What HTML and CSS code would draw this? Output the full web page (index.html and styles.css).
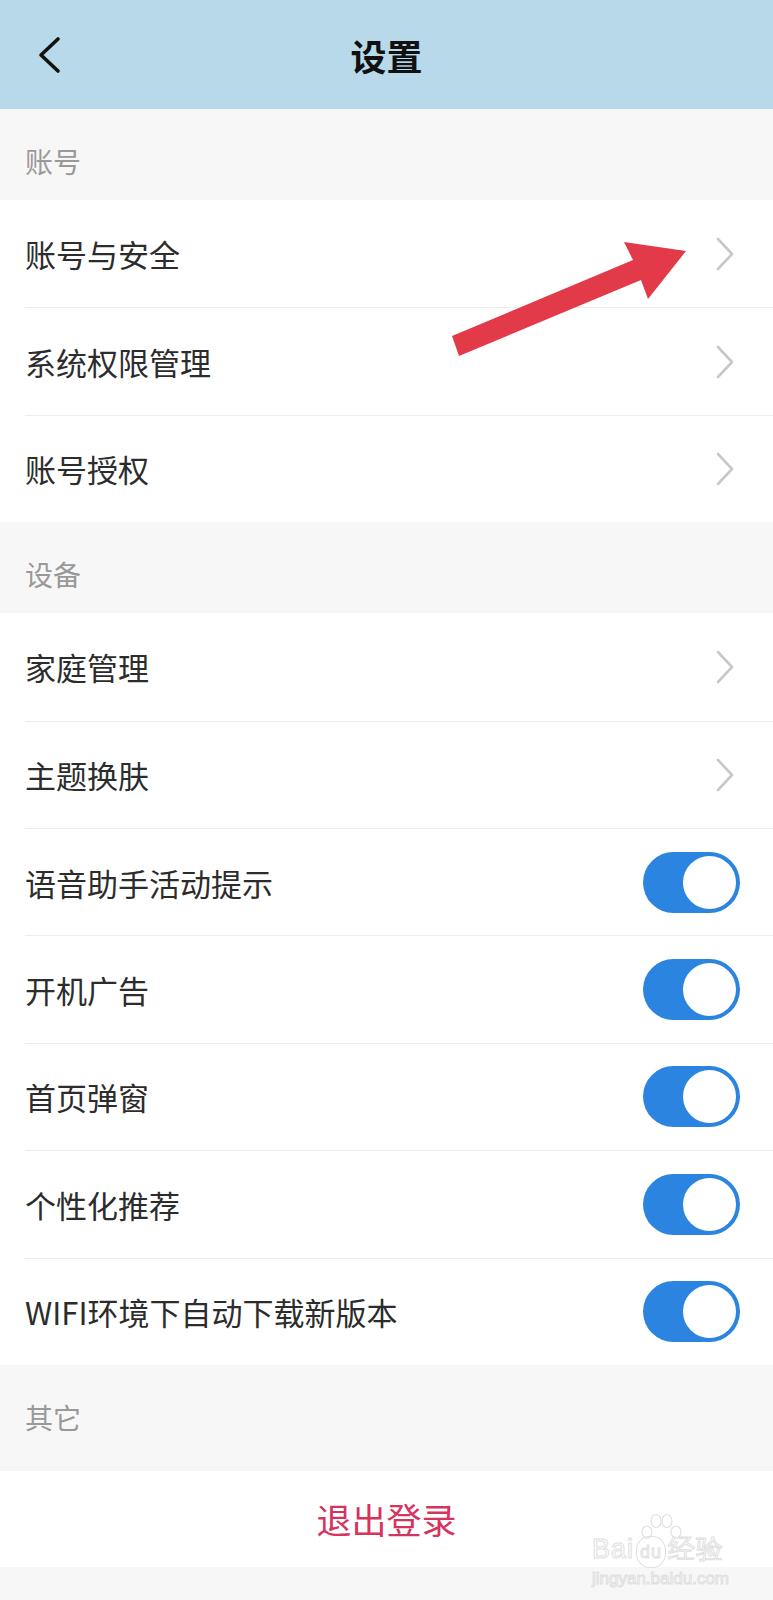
FILE: index.html
```html
<!DOCTYPE html>
<html>
  <head>
    <meta charset="utf-8">
    <link rel="stylesheet" href="styles.css">
  </head>
  <body>
    <header class="topbar">
      <div class="back">
        <svg width="30" height="44" viewBox="0 0 30 44">
          <polyline points="23,6 6,22 23,38" fill="none" stroke="#111" stroke-width="3.6" stroke-linecap="round" stroke-linejoin="round" />
        </svg>
      </div>
      <h1 class="title">设置</h1>
      <div></div>
    </header>

    <div class="section-label">账号</div>
    <div class="group">
      <div class="row"><span>账号与安全</span><svg class="chevron" width="20" height="34" viewBox="0 0 20 34"><polyline points="3,2 17,17 3,32" /></svg></div>
      <div class="row"><span>系统权限管理</span><svg class="chevron" width="20" height="34" viewBox="0 0 20 34"><polyline points="3,2 17,17 3,32" /></svg></div>
      <div class="row"><span>账号授权</span><svg class="chevron" width="20" height="34" viewBox="0 0 20 34"><polyline points="3,2 17,17 3,32" /></svg></div>
    </div>

    <div class="section-label">设备</div>
    <div class="group">
      <div class="row"><span>家庭管理</span><svg class="chevron" width="20" height="34" viewBox="0 0 20 34"><polyline points="3,2 17,17 3,32" /></svg></div>
      <div class="row"><span>主题换肤</span><svg class="chevron" width="20" height="34" viewBox="0 0 20 34"><polyline points="3,2 17,17 3,32" /></svg></div>
      <div class="row"><span>语音助手活动提示</span><div class="switch on"><div class="knob"></div></div></div>
      <div class="row"><span>开机广告</span><div class="switch on"><div class="knob"></div></div></div>
      <div class="row"><span>首页弹窗</span><div class="switch on"><div class="knob"></div></div></div>
      <div class="row"><span>个性化推荐</span><div class="switch on"><div class="knob"></div></div></div>
      <div class="row"><span>WIFI环境下自动下载新版本</span><div class="switch on"><div class="knob"></div></div></div>
    </div>

    <div class="section-label tall">其它</div>
    <div class="logout">退出登录</div>

    <!-- annotation arrow drawn over the screenshot -->
    <svg class="annotation" width="773" height="400" viewBox="0 0 773 400">
      <polygon points="452,336 633,260 624,242 686,251 648,299 641,280 459,356" fill="#e23a48" />
    </svg>

    <div class="watermark">
      <svg class="wm-toes" width="44" height="30" viewBox="0 0 44 30">
        <ellipse cx="8" cy="20" rx="5" ry="6" />
        <ellipse cx="17" cy="9" rx="5" ry="6.5" />
        <ellipse cx="28" cy="9" rx="5" ry="6.5" />
        <ellipse cx="37" cy="20" rx="5" ry="6" />
      </svg>
      <div class="wm-logo">Bai<span class="wm-paw">du</span>经验</div>
      <div class="wm-url">jingyan.baidu.com</div>
    </div>
  </body>
</html>
```

FILE: styles.css
```css
body {
  margin: 0;
  background-color: #f7f7f7;
  font-family: "Noto Sans CJK SC", "Noto Sans", sans-serif;
  color: #2c2c2c;
  position: relative;
  min-height: 1600px;
}

.topbar {
  height: 109px;
  background-color: #b8d9ea;
  display: grid;
  grid-template-columns: 1fr auto 1fr;
  align-items: center;
}

.back {
  padding-left: 35px;
  display: flex;
  align-items: center;
}

.title {
  margin: 0;
  font-size: 36px;
  font-weight: 700;
  color: #111;
  line-height: 1;
}

.section-label {
  box-sizing: border-box;
  height: 91px;
  padding-top: 39px;
  padding-left: 25px;
  font-size: 28px;
  line-height: 27px;
  color: #999999;
}

.section-label.tall {
  height: 106px;
}

.group {
  background-color: #ffffff;
  padding-left: 25px;
}

.row {
  box-sizing: border-box;
  height: 107.4px;
  display: flex;
  align-items: center;
  justify-content: space-between;
  padding-right: 33px;
  font-size: 31px;
}

.row + .row {
  border-top: 1px solid #ededed;
}

.chevron {
  margin-right: 5px;
}

.chevron polyline {
  fill: none;
  stroke: #c8c8c8;
  stroke-width: 2.6;
  stroke-linecap: round;
  stroke-linejoin: round;
}

.switch {
  box-sizing: border-box;
  width: 97px;
  height: 61px;
  border-radius: 31px;
  background-color: #2b84e0;
  padding: 4px;
  display: flex;
  justify-content: flex-end;
}

.knob {
  width: 53px;
  height: 53px;
  border-radius: 50%;
  background-color: #ffffff;
}

.logout {
  height: 96px;
  background-color: #ffffff;
  display: flex;
  align-items: center;
  justify-content: center;
  font-size: 35px;
  color: #d5345e;
}

.annotation {
  position: absolute;
  left: 0;
  top: 0;
  pointer-events: none;
}

.watermark {
  position: absolute;
  left: 592px;
  top: 1512px;
  color: rgba(255, 255, 255, 0.5);
  -webkit-text-stroke: 1px #e0e0e0;
  font-family: "Liberation Sans", sans-serif;
  pointer-events: none;
}

.wm-toes {
  display: block;
  margin-left: 47px;
  margin-bottom: -8px;
  fill: none;
  stroke: #e0e0e0;
  stroke-width: 1.2;
}

.wm-logo {
  font-size: 27px;
  line-height: 30px;
  letter-spacing: 1px;
}

.wm-paw {
  display: inline-block;
  font-size: 18px;
  border: 1px solid #e0e0e0;
  border-radius: 45%;
  padding: 0 3px;
  margin: 0 2px;
}

.wm-url {
  font-size: 17px;
  line-height: 22px;
}
```
